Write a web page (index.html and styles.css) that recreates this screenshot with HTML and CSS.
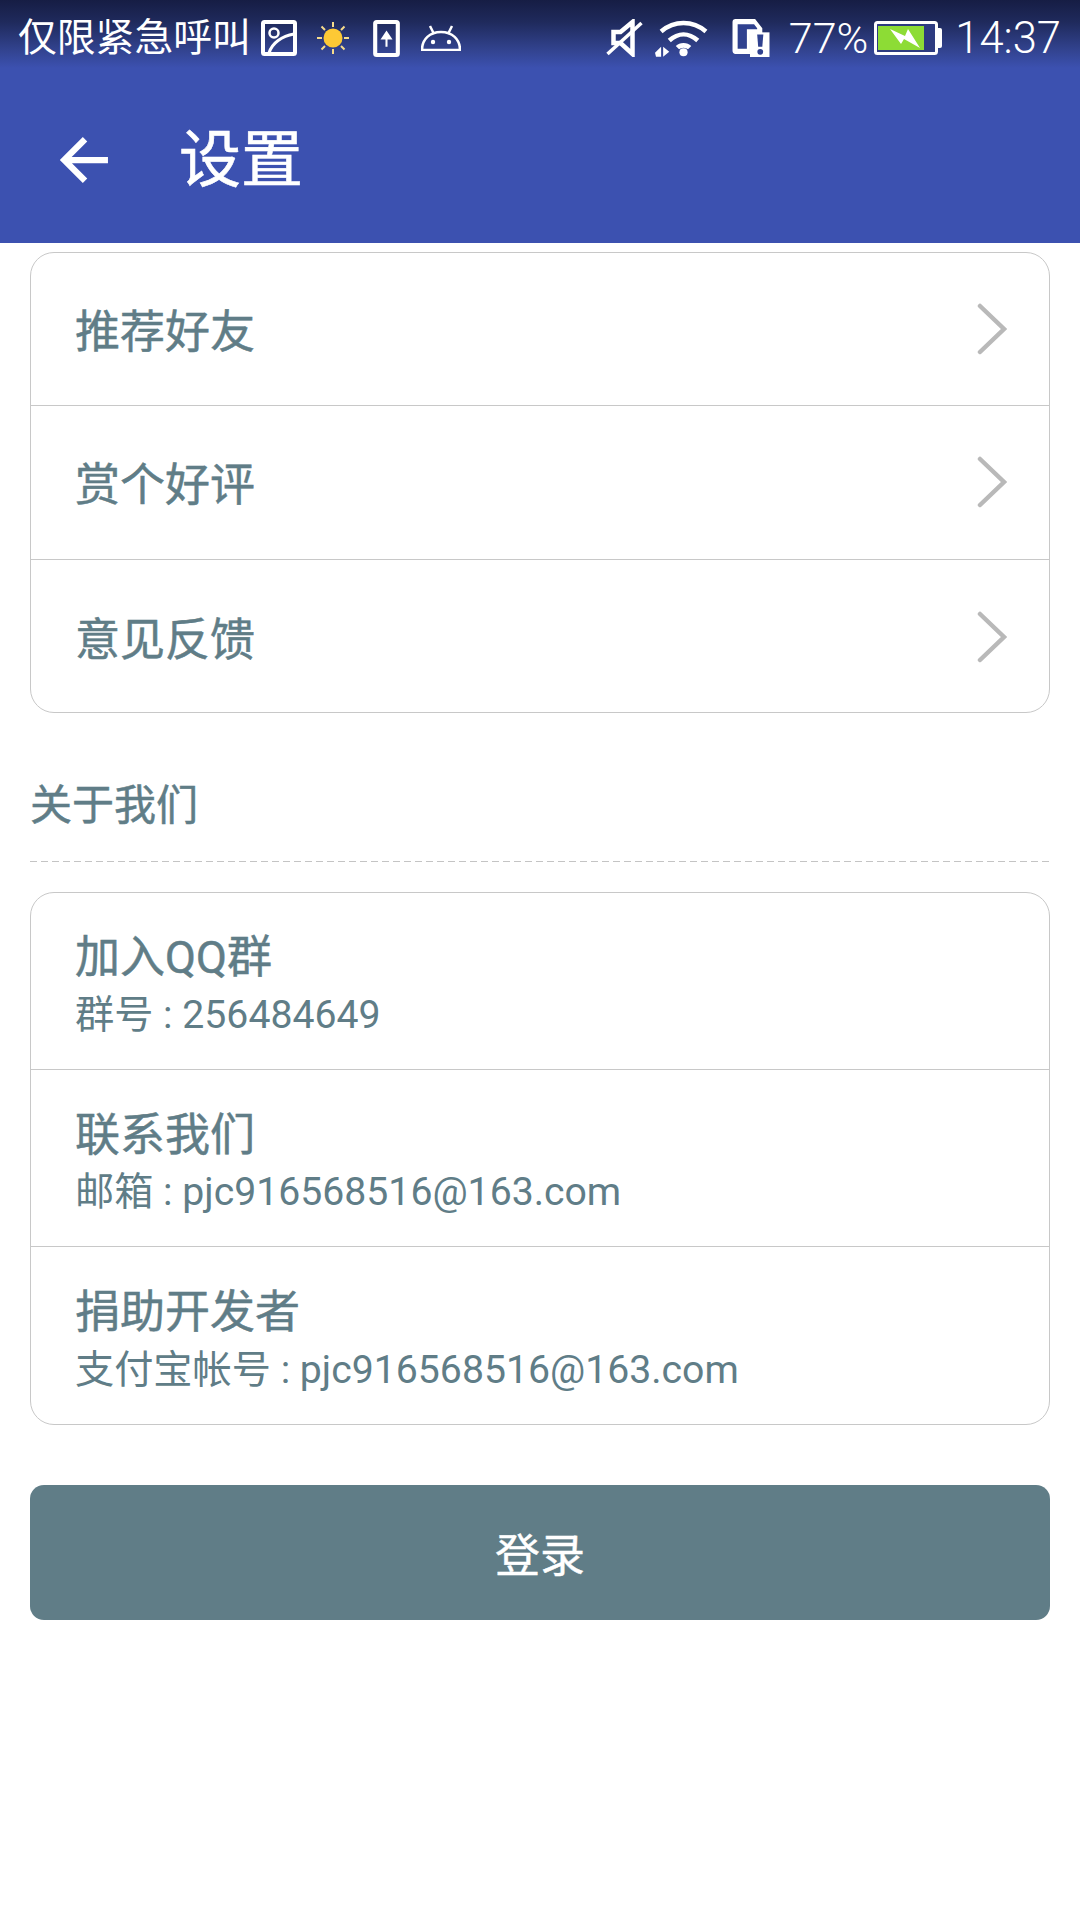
FILE: index.html
```html
<!DOCTYPE html>
<html lang="zh">
<head>
<meta charset="utf-8">
<title>设置</title>
<link rel="stylesheet" href="styles.css">
</head>
<body>
<header class="appbar">
  <div class="status">
    <div class="status-left">
      <span class="carrier">仅限紧急呼叫</span>
      <svg class="ic ic-pic" viewBox="0 0 36 36"><rect x="2" y="2" width="32" height="32" rx="1.5" fill="none" stroke="#fff" stroke-width="4"/><circle cx="13" cy="13" r="4.500" fill="none" stroke="#fff" stroke-width="2.500"/><path d="M8 33C11 23 21 16 33 14" fill="none" stroke="#fff" stroke-width="3"/></svg>
      <svg class="ic ic-sun" viewBox="0 0 32 32"><circle cx="16" cy="16" r="9.500" fill="#fdc935"/><path d="M16 0v5M16 27v5M0 16h5M27 16h5M4.500 4.500l3.500 3.500M24 24l3.500 3.500M4.500 27.500L8 24M24 8l3.500-3.500" stroke="#f6dc8c" stroke-width="2"/></svg>
      <svg class="ic ic-up" viewBox="0 0 26 36"><rect x="2" y="2" width="22" height="32" rx="1.500" fill="none" stroke="#fff" stroke-width="4"/><path d="M13 26V15M9 18L13 12l4 6z" fill="#fff" stroke="#fff" stroke-width="2"/></svg>
      <svg class="ic ic-android" viewBox="0 0 40 26"><path d="M1 25C1 14 9 7 20 7s19 7 19 18z" fill="none" stroke="#fff" stroke-width="2.500"/><path d="M9 1l4 8M31 1l-4 8" stroke="#fff" stroke-width="2.500"/><circle cx="12" cy="17" r="2.200" fill="#fff"/><circle cx="28" cy="17" r="2.200" fill="#fff"/></svg>
    </div>
    <div class="status-right">
      <svg class="ic ic-mute" viewBox="0 0 36 38"><path d="M7 13h7L26 3v32L14 24H7z" fill="none" stroke="#fff" stroke-width="4.500"/><path d="M1 35L35 4" stroke="#fff" stroke-width="3.500"/></svg>
      <svg class="ic ic-wifi" viewBox="0 0 54 37"><path d="M6 12C19 1 37 1 50 12M14 21C23 13 33 13 42 21M22 28C25 25 31 25 34 28" fill="none" stroke="#fff" stroke-width="4.500"/><circle cx="28" cy="32.500" r="4" fill="#fff"/><path d="M0 33l6-6v10H1zM8 27l6 5-6 5z" fill="#fff"/></svg>
      <svg class="ic ic-sim" viewBox="0 0 36 37"><path d="M3 0h19l7 9v5H17v20H3a3 3 0 0 1-3-3V3a3 3 0 0 1 3-3z" fill="#fff"/><path d="M5 5h16l3 4v1H14v19H5z" fill="#2f418f"/><path d="M17 13h19v24H17z" fill="#fff"/><path d="M24 15h6l-1 12h-4z" fill="#2f418f"/><circle cx="27" cy="32" r="2.800" fill="#2f418f"/></svg>
      <span class="pct">77%</span>
      <svg class="ic ic-bat" viewBox="0 0 68 34"><rect x="1.500" y="1.500" width="61" height="31" rx="2" fill="#2d3b80" stroke="#fff" stroke-width="3"/><rect x="4" y="5" width="46" height="24" fill="#8ddc35"/><path d="M64 7h2a2 2 0 0 1 2 2v16a2 2 0 0 1-2 2h-2z" fill="#fff"/><path d="M16 8l15 7 3-7 12 19-16-9-3 5z" fill="#fff"/></svg>
      <span class="clock">14:37</span>
    </div>
  </div>
  <div class="toolbar">
    <svg class="back" viewBox="0 0 48 48"><path d="M47 24H5M25 4L5 24l20 20" fill="none" stroke="#fff" stroke-width="6"/></svg>
    <h1 class="title">设置</h1>
  </div>
</header>
<main class="content">
  <section class="card">
    <div class="row row-link"><span class="row-title">推荐好友</span><svg class="chev" viewBox="0 0 30 52"><path d="M3 3l24 23L3 49" fill="none" stroke="#b9b9b9" stroke-width="4.500" stroke-linecap="round"/></svg></div>
    <div class="row row-link"><span class="row-title">赏个好评</span><svg class="chev" viewBox="0 0 30 52"><path d="M3 3l24 23L3 49" fill="none" stroke="#b9b9b9" stroke-width="4.500" stroke-linecap="round"/></svg></div>
    <div class="row row-link"><span class="row-title">意见反馈</span><svg class="chev" viewBox="0 0 30 52"><path d="M3 3l24 23L3 49" fill="none" stroke="#b9b9b9" stroke-width="4.500" stroke-linecap="round"/></svg></div>
  </section>
  <h2 class="section">关于我们</h2>
  <section class="card">
    <div class="row row-info"><span class="row-title">加入QQ群</span><span class="row-sub">群号 : 256484649</span></div>
    <div class="row row-info"><span class="row-title">联系我们</span><span class="row-sub">邮箱 : pjc916568516@163.com</span></div>
    <div class="row row-info"><span class="row-title">捐助开发者</span><span class="row-sub">支付宝帐号 : pjc916568516@163.com</span></div>
  </section>
  <button class="login">登录</button>
</main>
</body>
</html>
```
FILE: styles.css
```css
* { box-sizing: border-box; }
html, body { margin: 0; padding: 0; }
body {
  width: 1080px;
  height: 1920px;
  background: #fff;
  overflow: hidden;
  font-family: Roboto, "Noto Sans CJK SC", sans-serif;
  color: #607d87;
}
.appbar {
  height: 243px;
  background: linear-gradient(to bottom, #161d44 0, #1f2a5c 22px, #32438f 50px, #3c51b0 68px, #3c51b0 100%);
}
.status {
  height: 76px;
  padding: 0 19px 0 18px;
  display: flex;
  justify-content: space-between;
  align-items: center;
  color: #fff;
}
.status-left, .status-right { display: flex; align-items: center; }
.carrier { font-size: 38.800px; line-height: 76px; font-weight: 400; }
.ic { display: block; flex: none; }
.ic-pic { width: 36px; height: 36px; margin-left: 10px; }
.ic-sun { width: 32px; height: 32px; margin-left: 20px; }
.ic-up { width: 27px; height: 37px; margin-left: 24px; }
.ic-android { width: 40px; height: 26px; margin-left: 21px; }
.ic-mute { width: 37px; height: 38px; }
.ic-wifi { width: 55px; height: 38px; margin-left: 12px; }
.ic-sim { width: 38px; height: 38px; margin-left: 22px; }
.pct { font-size: 43px; font-weight: 300; margin-left: 19px; }
.ic-bat { width: 68px; height: 34px; margin-left: 6px; }
.clock { font-size: 43.500px; font-weight: 300; margin-left: 13px; }
.toolbar {
  height: 167px;
  display: flex;
  align-items: center;
  padding: 0 0 0 59px;
}
.back { width: 50px; height: 50px; }
.title {
  margin: 3px 0 0 70px;
  font-size: 62px;
  line-height: 70px;
  font-weight: 400;
  color: #fff;
  -webkit-text-stroke: 0.6px #fff;
}
.content { padding: 9px 30px 0; }
.card {
  border: 1px solid #c8c8c8;
  border-radius: 24px;
}
.row + .row { border-top: 1px solid #c8c8c8; }
.row { padding: 0 44px; }
.row-link {
  height: 153.500px;
  display: flex;
  justify-content: space-between;
  align-items: center;
}
.row-link:first-child { height: 152px; }
.row-link .row-title { margin-top: 7px; }
.row-link:last-child .row-title { margin-top: 10px; }
.row-info {
  height: 177.500px;
  padding-top: 9.500px;
  display: flex;
  flex-direction: column;
  justify-content: center;
}
.row-info:first-child { height: 175.500px; padding-top: 8.500px; }
.row-title { font-size: 45px; line-height: 56px; font-weight: 400; -webkit-text-stroke: 0.5px #607d87; }
.row-sub { font-size: 39.200px; line-height: 50px; margin-top: 3.500px; }
.chev { width: 30px; height: 52px; margin: 0 -2px 1px 0; }
.row-link:last-child .chev { margin-bottom: 0; margin-top: 2px; }
.section {
  margin: 45px 0 30px;
  height: 104px;
  padding-top: 18px;
  background: repeating-linear-gradient(to right, #c4c4c4 0 7px, transparent 7px 11px) left bottom / 100% 1px no-repeat;
  font-size: 42px;
  line-height: 60px;
  font-weight: 400;
  -webkit-text-stroke: 0.5px #607d87;
}
.login {
  display: block;
  width: 100%;
  height: 135px;
  margin-top: 60px;
  padding: 8px 0 0;
  border: 0;
  border-radius: 14px;
  background: #607d87;
  color: #fff;
  font: 400 45px/1 Roboto, "Noto Sans CJK SC", sans-serif;
  -webkit-text-stroke: 0.4px #fff;
}
```
